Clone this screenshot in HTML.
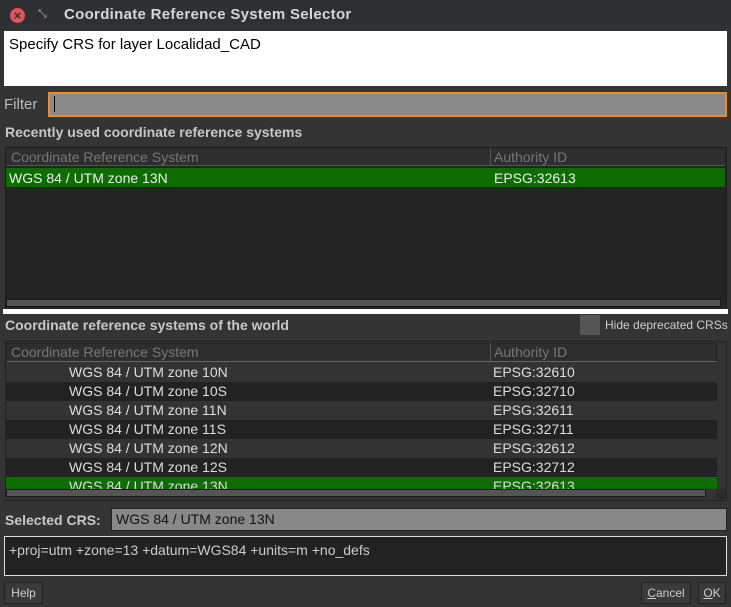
<!DOCTYPE html>
<html><head><style>
*{margin:0;padding:0;box-sizing:border-box}
body{width:731px;height:607px;background:#343434;font-family:"Liberation Sans",sans-serif;font-size:14px;color:#ddd;position:relative;overflow:hidden}
.a{position:absolute;white-space:nowrap}
.b{font-weight:bold;color:#c8c8c8;font-size:14px}
.row{position:absolute;left:6px;width:711px;height:19px;line-height:19px;font-size:14px}
.row span{position:absolute}
</style></head><body>
<div class="a" style="left:0;top:0;width:731px;height:30px;background:#2f3034"></div>
<div class="a" style="left:10px;top:8px;width:15px;height:15px;border-radius:50%;background:#e05555;color:#333;font-size:13px;line-height:15px;text-align:center;font-weight:bold">×</div>
<div class="a" style="left:38px;top:8px;color:#aaa;font-size:11px">⤡</div>
<div class="a" style="left:64px;top:6px;font-size:15px;font-weight:bold;color:#d6d6d6;letter-spacing:0.3px">Coordinate Reference System Selector</div>

<div class="a" style="left:4px;top:31px;width:723px;height:55px;background:#fff"></div>
<div class="a" style="left:9px;top:36px;font-size:15px;color:#000">Specify CRS for layer Localidad_CAD</div>

<div class="a" style="left:4px;top:96px;font-size:15px;color:#bbb">Filter</div>
<div class="a" style="left:48px;top:92px;width:679px;height:25px;background:#8a8a8a;border:2px solid #f0891e"></div>
<div class="a" style="left:54px;top:96px;width:1px;height:16px;background:#000"></div>

<div class="a b" style="left:5px;top:124px">Recently used coordinate reference systems</div>
<div class="a" style="left:5px;top:147px;width:722px;height:163px;background:#242424;border:1px solid #1a1a1a"></div>
<div class="a" style="left:6px;top:148px;width:719px;height:18px;background:#2e2e2e;border-bottom:1px solid #555"></div>
<div class="a" style="left:11px;top:149px;color:#777;font-size:14px">Coordinate Reference System</div>
<div class="a" style="left:490px;top:148px;width:1px;height:18px;background:#555"></div>
<div class="a" style="left:494px;top:149px;color:#777;font-size:14px">Authority ID</div>
<div class="a" style="left:6px;top:168px;width:719px;height:19px;background:#0e6d00"></div>
<div class="a" style="left:9px;top:170px;font-size:14px;color:#eee">WGS 84 / UTM zone 13N</div>
<div class="a" style="left:494px;top:170px;font-size:14px;color:#eee">EPSG:32613</div>
<div class="a" style="left:6px;top:299px;width:715px;height:8px;background:#555;border:1px solid #1a1a1a"></div>
<div class="a" style="left:3px;top:309px;width:725px;height:5px;background:#fff"></div>

<div class="a b" style="left:5px;top:317px">Coordinate reference systems of the world</div>
<div class="a" style="left:580px;top:315px;width:20px;height:20px;background:#555"></div>
<div class="a" style="left:605px;top:318px;font-size:12px;color:#ccc">Hide deprecated CRSs</div>

<div class="a" style="left:5px;top:341px;width:722px;height:160px;background:#333;border:1px solid #222"></div>
<div class="a" style="left:6px;top:343px;width:711px;height:19px;background:#2e2e2e;border:1px solid #222;border-bottom:1px solid #666"></div>
<div class="a" style="left:11px;top:344px;color:#777;font-size:14px">Coordinate Reference System</div>
<div class="a" style="left:490px;top:343px;width:1px;height:18px;background:#555"></div>
<div class="a" style="left:494px;top:344px;color:#777;font-size:14px">Authority ID</div>
<div class="row" style="top:363px;background:#333"><span style="left:63px">WGS 84 / UTM zone 10N</span><span style="left:487px">EPSG:32610</span></div>
<div class="row" style="top:382px;background:#222"><span style="left:63px">WGS 84 / UTM zone 10S</span><span style="left:487px">EPSG:32710</span></div>
<div class="row" style="top:401px;background:#333"><span style="left:63px">WGS 84 / UTM zone 11N</span><span style="left:487px">EPSG:32611</span></div>
<div class="row" style="top:420px;background:#222"><span style="left:63px">WGS 84 / UTM zone 11S</span><span style="left:487px">EPSG:32711</span></div>
<div class="row" style="top:439px;background:#333"><span style="left:63px">WGS 84 / UTM zone 12N</span><span style="left:487px">EPSG:32612</span></div>
<div class="row" style="top:458px;background:#222"><span style="left:63px">WGS 84 / UTM zone 12S</span><span style="left:487px">EPSG:32712</span></div>
<div class="row" style="top:477px;height:12px;overflow:hidden;background:#0e6d00"><span style="left:63px;top:0">WGS 84 / UTM zone 13N</span><span style="left:487px">EPSG:32613</span></div>
<div class="a" style="left:6px;top:489px;width:700px;height:8px;background:#555;border:1px solid #1a1a1a"></div>
<div class="a" style="left:716px;top:489px;width:10px;height:10px;background:#2a2a2a"></div>

<div class="a b" style="left:5px;top:512px">Selected CRS:</div>
<div class="a" style="left:111px;top:508px;width:616px;height:23px;background:#888;border:1px solid #222"></div>
<div class="a" style="left:116px;top:511px;font-size:14px;color:#111">WGS 84 / UTM zone 13N</div>

<div class="a" style="left:4px;top:536px;width:723px;height:40px;background:#222;border:1px solid #ddd"></div>
<div class="a" style="left:9px;top:542px;font-size:14px;color:#ccc">+proj=utm +zone=13 +datum=WGS84 +units=m +no_defs</div>

<div class="a" style="left:4px;top:582px;width:39px;height:22px;background:#3a3a3a;border:1px solid #222;color:#ccc;font-size:12px;line-height:20px;text-align:center">Help</div>
<div class="a" style="left:641px;top:582px;width:50px;height:22px;background:#3a3a3a;border:1px solid #222;color:#ccc;font-size:12px;line-height:20px;text-align:center"><u>C</u>ancel</div>
<div class="a" style="left:698px;top:582px;width:28px;height:22px;background:#3a3a3a;border:1px solid #222;color:#ccc;font-size:12px;line-height:20px;text-align:center"><u>O</u>K</div>
</body></html>
